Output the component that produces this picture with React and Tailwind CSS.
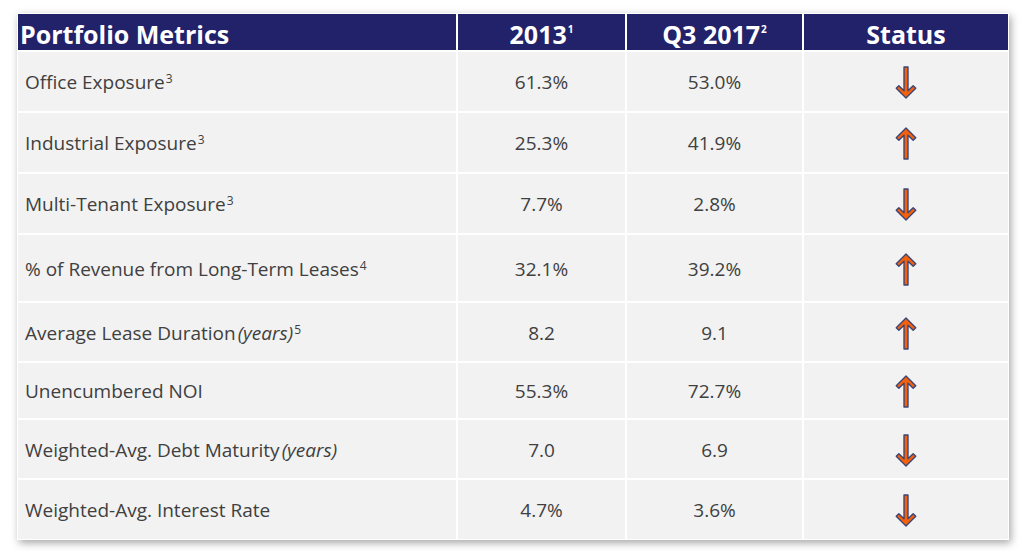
import React from "react";

const rows = [
  { label: "Office Exposure", sup: "3", a: "61.3%", b: "53.0%", dir: "down", h: "h-[59px]" },
  { label: "Industrial Exposure", sup: "3", a: "25.3%", b: "41.9%", dir: "up", h: "h-[59px]" },
  { label: "Multi-Tenant Exposure", sup: "3", a: "7.7%", b: "2.8%", dir: "down", h: "h-[59px]" },
  { label: "% of Revenue from Long-Term Leases", sup: "4", a: "32.1%", b: "39.2%", dir: "up", h: "h-[66px]" },
  { label: "Average Lease Duration", it: "(years)", sup: "5", a: "8.2", b: "9.1", dir: "up", h: "h-[58px]" },
  { label: "Unencumbered NOI", a: "55.3%", b: "72.7%", dir: "up", h: "h-[55px]" },
  { label: "Weighted-Avg. Debt Maturity", it: "(years)", a: "7.0", b: "6.9", dir: "down", h: "h-[58px]" },
  { label: "Weighted-Avg. Interest Rate", a: "4.7%", b: "3.6%", dir: "down", h: "h-[59px]" },
];

function Arrow({ dir }) {
  const down =
    "M8.1,1 L11.9,1 L11.9,23.6 L16.8,18.7 L19.3,21.2 L10,30.4 L0.7,21.2 L3.2,18.7 L8.1,23.6 Z";
  return (
    <svg width="22" height="33" viewBox="0 0 20 31.4" className={dir === "up" ? "rotate-180" : ""}>
      <path d={down} fill="#f4600c" stroke="#3a4577" strokeWidth="1.3" strokeLinejoin="round" />
    </svg>
  );
}

export default function App() {
  return (
    <div className="w-[1028px] h-[551px] bg-white pt-[13px] pl-[17px]" style={{ fontFamily: '"Open Sans", "Noto Sans", sans-serif' }}>
      <div className="w-[992px] bg-white p-px grid grid-cols-[438px_167px_175px_204px] gap-[2px] shadow-[2px_3px_8px_rgba(0,0,0,0.35)]">
        <div className="h-[36px] bg-[#22226b] text-white font-bold text-[25px] leading-none flex items-center pl-[2px] pt-[5px]">
          Portfolio Metrics
        </div>
        <div className="h-[36px] bg-[#22226b] text-white font-bold text-[25px] leading-none flex items-center justify-center pt-[5px]">
          2013<sup className="text-[10px] ml-[1px] -top-[0.6em]">1</sup>
        </div>
        <div className="h-[36px] bg-[#22226b] text-white font-bold text-[25px] leading-none flex items-center justify-center pt-[5px]">
          Q3 2017<sup className="text-[10px] ml-[1px] -top-[0.6em]">2</sup>
        </div>
        <div className="h-[36px] bg-[#22226b] text-white font-bold text-[25px] leading-none flex items-center justify-center pt-[5px]">
          Status
        </div>
        {rows.map((r, i) => (
          <React.Fragment key={i}>
            <div className={`${r.h} bg-[#f2f2f2] text-[#404040] text-[19px] flex items-center pl-[7px] pt-[2px]`}>
              <span>
                {r.label}
                {r.it && <i className="ml-[2px]">{r.it}</i>}
                {r.sup && <sup className="text-[12px] ml-[1px]">{r.sup}</sup>}
              </span>
            </div>
            <div className={`${r.h} bg-[#f2f2f2] text-[#404040] text-[19px] flex items-center justify-center pt-[2px]`}>{r.a}</div>
            <div className={`${r.h} bg-[#f2f2f2] text-[#404040] text-[19px] flex items-center justify-center pt-[2px]`}>{r.b}</div>
            <div className={`${r.h} bg-[#f2f2f2] flex items-center justify-center pt-[2px]`}>
              <Arrow dir={r.dir} />
            </div>
          </React.Fragment>
        ))}
      </div>
    </div>
  );
}
